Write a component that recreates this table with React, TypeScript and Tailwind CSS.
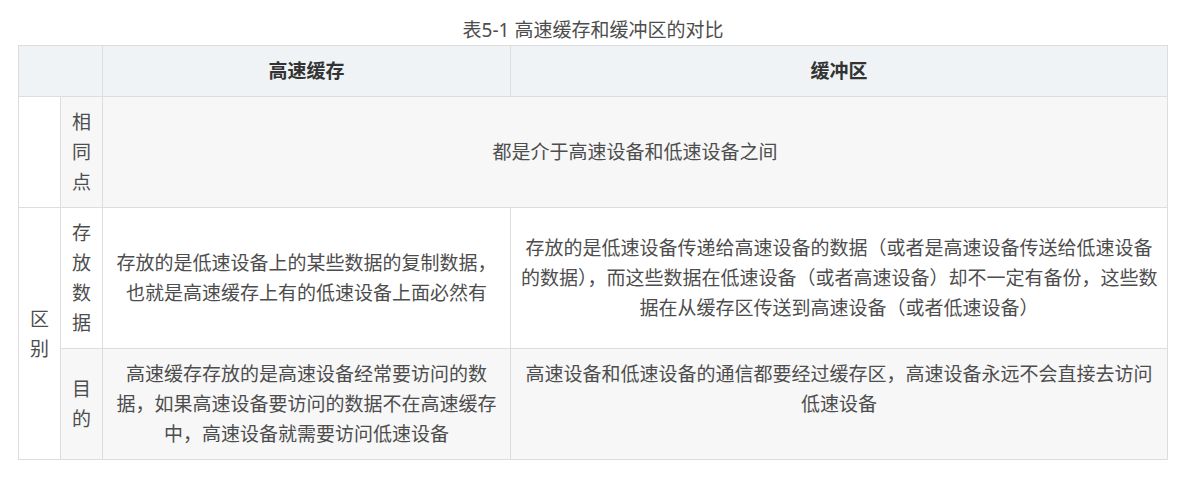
const cell =
  "border border-[#dddddd] px-[10px] py-[10px] text-center align-middle";

export default function App() {
  return (
    <div className="min-h-[477px] bg-white px-[18px] pt-[15px] font-['Noto_Sans','Noto_Sans_CJK_SC',sans-serif] text-[19px] leading-[30px] text-[#4d4d4d]">
      <div className="text-center">表5-1 高速缓存和缓冲区的对比</div>
      <table className="w-full table-fixed border-collapse">
        <colgroup>
          <col className="w-[42px]" />
          <col className="w-[42px]" />
          <col className="w-[408px]" />
          <col />
        </colgroup>
        <thead>
          <tr className="bg-[#eff3f5] font-bold text-[#333333]">
            <th colSpan={2} className={cell}></th>
            <th className={cell}>高速缓存</th>
            <th className={cell}>缓冲区</th>
          </tr>
        </thead>
        <tbody>
          <tr className="bg-[#f7f7f7]">
            <td className="border border-[#dddddd] bg-white"></td>
            <td className={cell}>相同点</td>
            <td colSpan={2} className={cell}>
              都是介于高速设备和低速设备之间
            </td>
          </tr>
          <tr className="bg-white">
            <td rowSpan={2} className={`${cell} bg-white`}>
              区别
            </td>
            <td className={cell}>存放数据</td>
            <td className={`${cell} whitespace-nowrap`}>
              存放的是低速设备上的某些数据的复制数据，
              <br />
              也就是高速缓存上有的低速设备上面必然有
            </td>
            <td className={`${cell} whitespace-nowrap`}>
              存放的是低速设备传递给高速设备的数据（或者是高速设备传送给低速设备
              <br />
              的数据），而这些数据在低速设备（或者高速设备）却不一定有备份，这些数
              <br />
              据在从缓存区传送到高速设备（或者低速设备）
            </td>
          </tr>
          <tr className="bg-[#f7f7f7]">
            <td className={cell}>目的</td>
            <td className={`${cell} whitespace-nowrap`}>
              高速缓存存放的是高速设备经常要访问的数
              <br />
              据，如果高速设备要访问的数据不在高速缓存
              <br />
              中，高速设备就需要访问低速设备
            </td>
            <td className="border border-[#dddddd] px-[10px] py-[10px] text-center align-top whitespace-nowrap">
              高速设备和低速设备的通信都要经过缓存区，高速设备永远不会直接去访问
              <br />
              低速设备
            </td>
          </tr>
        </tbody>
      </table>
    </div>
  );
}
